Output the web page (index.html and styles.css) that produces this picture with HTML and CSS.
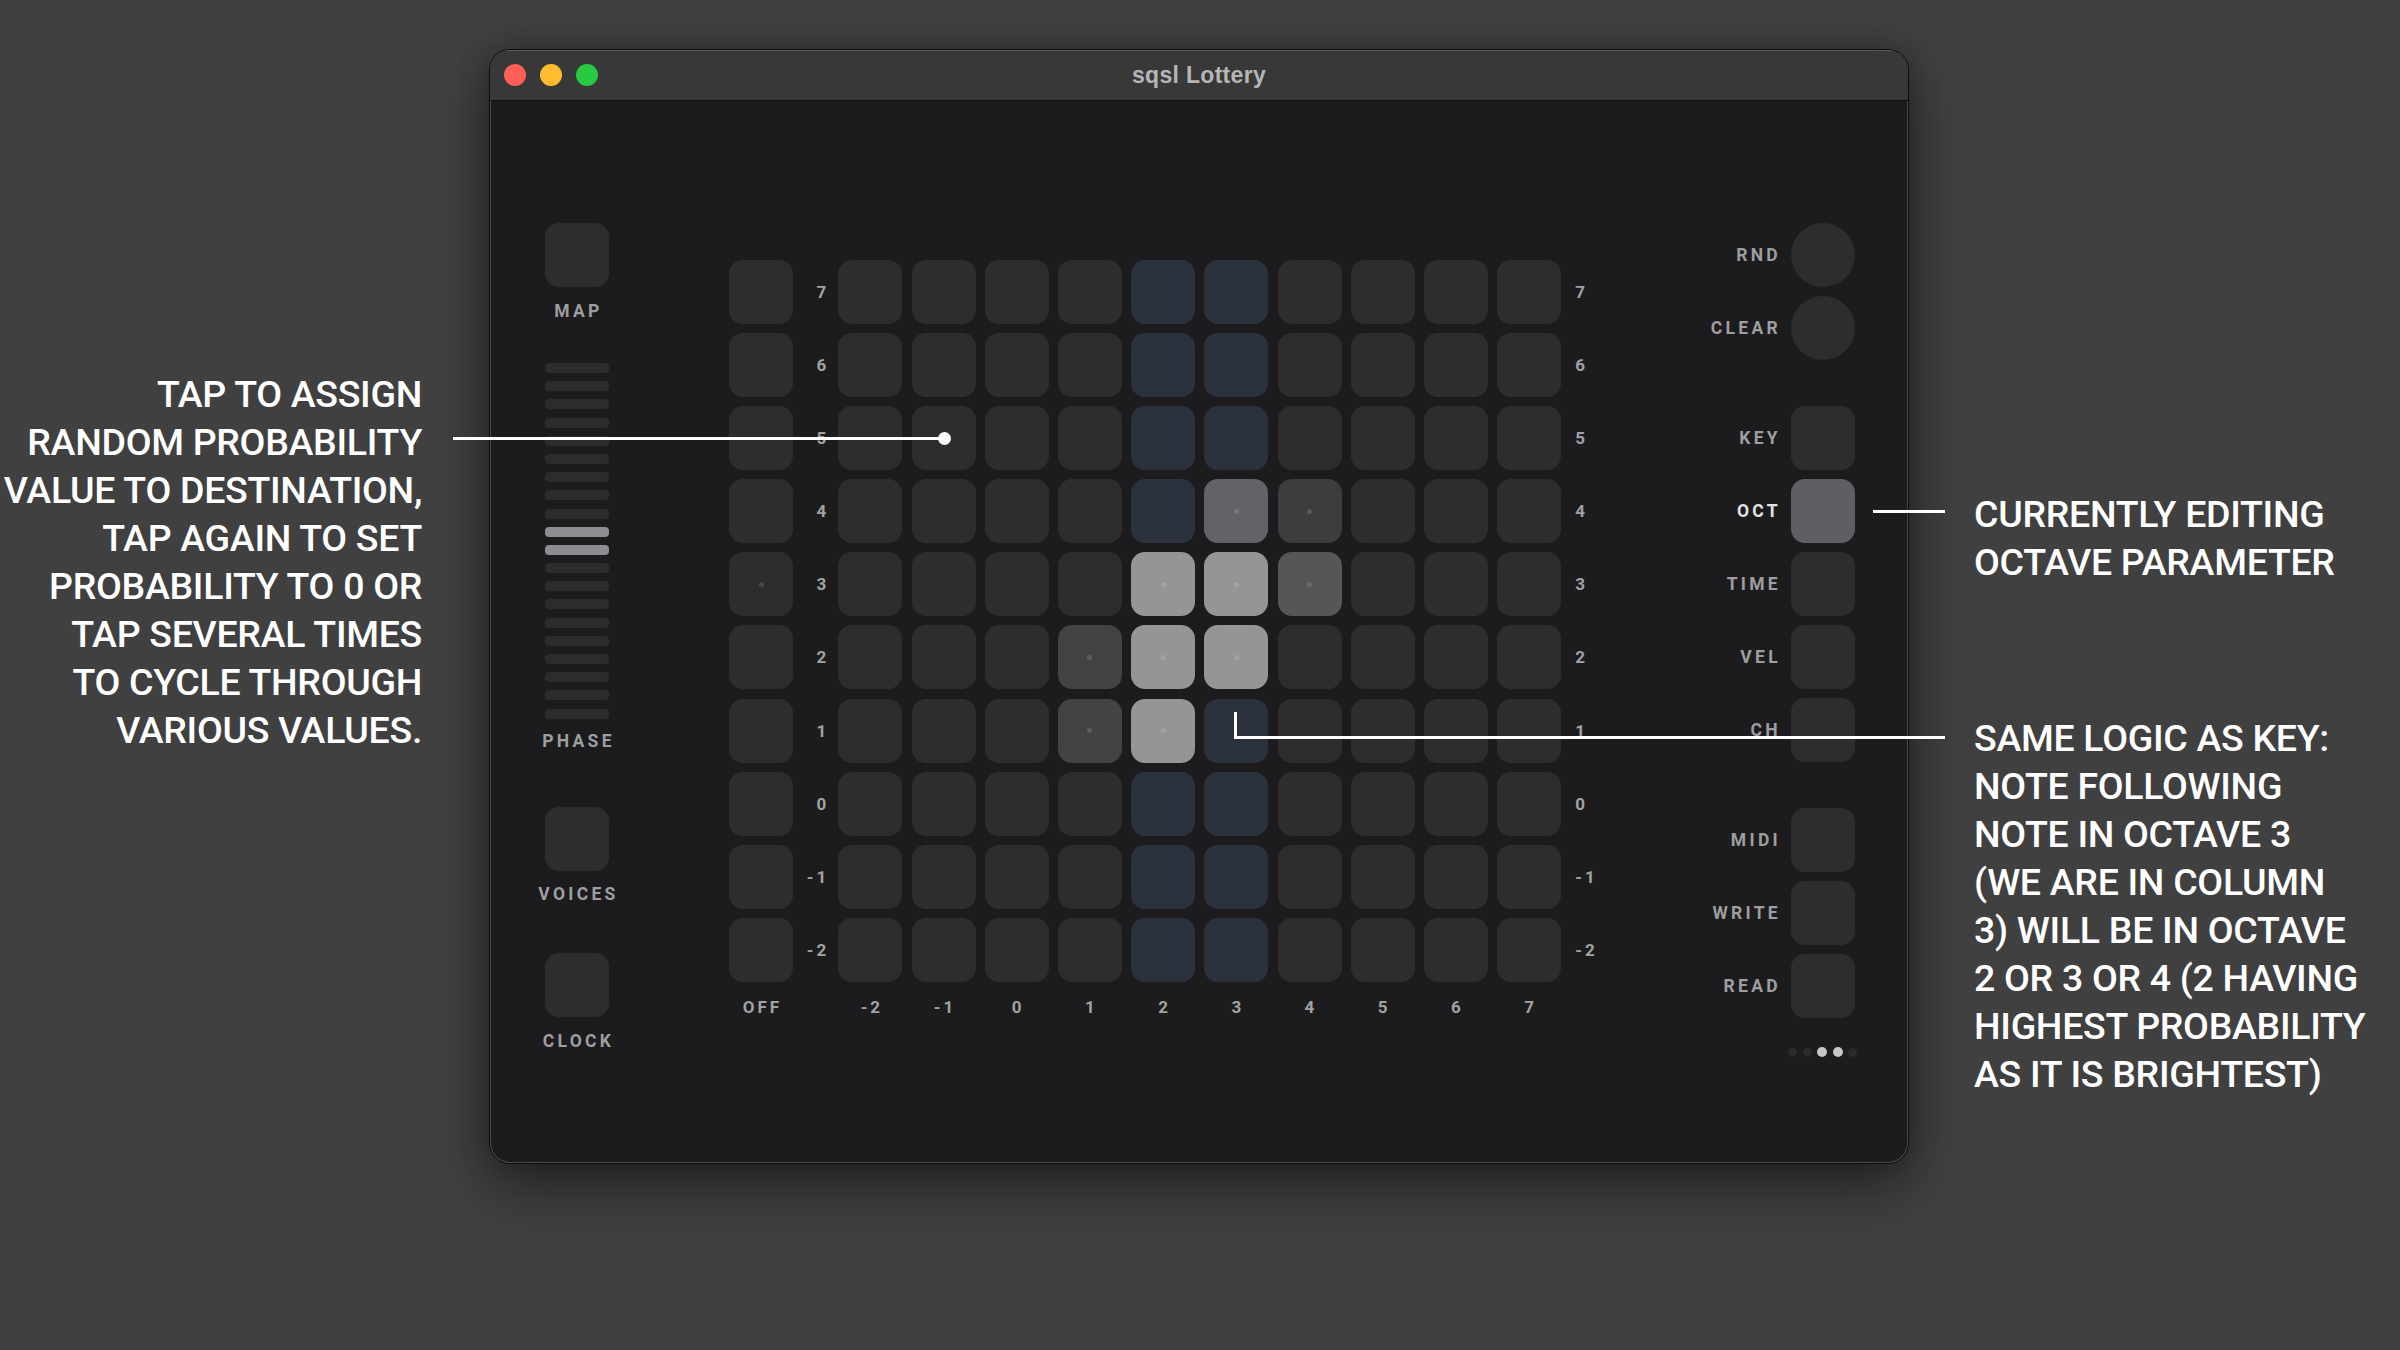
FILE: index.html
```html
<!DOCTYPE html>
<html lang="en">
<head>
<meta charset="utf-8">
<title>sqsl Lottery</title>
<link rel="stylesheet" href="styles.css">
</head>
<body>
<div class="stage">
  <div class="note note-left">TAP TO ASSIGN<br>RANDOM PROBABILITY<br>VALUE TO DESTINATION,<br>TAP AGAIN TO SET<br>PROBABILITY TO 0 OR<br>TAP SEVERAL TIMES<br>TO CYCLE THROUGH<br>VARIOUS VALUES.</div>

  <div class="window">
    <div class="titlebar">
      <div class="lights"><span class="light red"></span><span class="light yellow"></span><span class="light green"></span></div>
      <div class="title">sqsl Lottery</div>
      <div></div>
    </div>
    <div class="content">
      <div class="left-panel">
        <div class="btn"></div>
        <div class="lbl lbl-map">MAP</div>
        <div class="phase">
          <span class="bar"></span><span class="bar"></span><span class="bar"></span><span class="bar"></span><span class="bar"></span>
          <span class="bar"></span><span class="bar"></span><span class="bar"></span><span class="bar"></span><span class="bar on"></span>
          <span class="bar on"></span><span class="bar"></span><span class="bar"></span><span class="bar"></span><span class="bar"></span>
          <span class="bar"></span><span class="bar"></span><span class="bar"></span><span class="bar"></span><span class="bar"></span>
        </div>
        <div class="lbl lbl-phase">PHASE</div>
        <div class="btn btn-voices"></div>
        <div class="lbl lbl-voices">VOICES</div>
        <div class="btn btn-clock"></div>
        <div class="lbl lbl-clock">CLOCK</div>
      </div>

      <div class="grid">
        <!-- row 7 -->
        <div class="cell"></div><div class="rl">7</div>
        <div class="cell"></div><div class="cell"></div><div class="cell"></div><div class="cell"></div><div class="cell blue"></div><div class="cell blue"></div><div class="cell"></div><div class="cell"></div><div class="cell"></div><div class="cell"></div>
        <div class="rr">7</div>
        <!-- row 6 -->
        <div class="cell"></div><div class="rl">6</div>
        <div class="cell"></div><div class="cell"></div><div class="cell"></div><div class="cell"></div><div class="cell blue"></div><div class="cell blue"></div><div class="cell"></div><div class="cell"></div><div class="cell"></div><div class="cell"></div>
        <div class="rr">6</div>
        <!-- row 5 -->
        <div class="cell"></div><div class="rl">5</div>
        <div class="cell"></div><div class="cell"></div><div class="cell"></div><div class="cell"></div><div class="cell blue"></div><div class="cell blue"></div><div class="cell"></div><div class="cell"></div><div class="cell"></div><div class="cell"></div>
        <div class="rr">5</div>
        <!-- row 4 -->
        <div class="cell"></div><div class="rl">4</div>
        <div class="cell"></div><div class="cell"></div><div class="cell"></div><div class="cell"></div><div class="cell blue"></div><div class="cell v4"><span class="pip"></span></div><div class="cell v1"><span class="pip"></span></div><div class="cell"></div><div class="cell"></div><div class="cell"></div>
        <div class="rr">4</div>
        <!-- row 3 -->
        <div class="cell"><span class="pip"></span></div><div class="rl">3</div>
        <div class="cell"></div><div class="cell"></div><div class="cell"></div><div class="cell"></div><div class="cell v5"><span class="pip"></span></div><div class="cell v5"><span class="pip"></span></div><div class="cell v3"><span class="pip"></span></div><div class="cell"></div><div class="cell"></div><div class="cell"></div>
        <div class="rr">3</div>
        <!-- row 2 -->
        <div class="cell"></div><div class="rl">2</div>
        <div class="cell"></div><div class="cell"></div><div class="cell"></div><div class="cell v2"><span class="pip"></span></div><div class="cell v5"><span class="pip"></span></div><div class="cell v5"><span class="pip"></span></div><div class="cell"></div><div class="cell"></div><div class="cell"></div><div class="cell"></div>
        <div class="rr">2</div>
        <!-- row 1 -->
        <div class="cell"></div><div class="rl">1</div>
        <div class="cell"></div><div class="cell"></div><div class="cell"></div><div class="cell v2"><span class="pip"></span></div><div class="cell v5"><span class="pip"></span></div><div class="cell blue"></div><div class="cell"></div><div class="cell"></div><div class="cell"></div><div class="cell"></div>
        <div class="rr">1</div>
        <!-- row 0 -->
        <div class="cell"></div><div class="rl">0</div>
        <div class="cell"></div><div class="cell"></div><div class="cell"></div><div class="cell"></div><div class="cell blue"></div><div class="cell blue"></div><div class="cell"></div><div class="cell"></div><div class="cell"></div><div class="cell"></div>
        <div class="rr">0</div>
        <!-- row -1 -->
        <div class="cell"></div><div class="rl">-1</div>
        <div class="cell"></div><div class="cell"></div><div class="cell"></div><div class="cell"></div><div class="cell blue"></div><div class="cell blue"></div><div class="cell"></div><div class="cell"></div><div class="cell"></div><div class="cell"></div>
        <div class="rr">-1</div>
        <!-- row -2 -->
        <div class="cell"></div><div class="rl">-2</div>
        <div class="cell"></div><div class="cell"></div><div class="cell"></div><div class="cell"></div><div class="cell blue"></div><div class="cell blue"></div><div class="cell"></div><div class="cell"></div><div class="cell"></div><div class="cell"></div>
        <div class="rr">-2</div>
        <!-- column labels -->
        <div class="cl">OFF</div><div></div>
        <div class="cl">-2</div><div class="cl">-1</div><div class="cl">0</div><div class="cl">1</div><div class="cl">2</div><div class="cl">3</div><div class="cl">4</div><div class="cl">5</div><div class="cl">6</div><div class="cl">7</div>
        <div></div>
      </div>

      <div class="right-panel">
        <div class="ctl"><span class="lbl">RND</span><span class="btn round"></span></div>
        <div class="ctl"><span class="lbl">CLEAR</span><span class="btn round"></span></div>
        <div class="ctl group"><span class="lbl">KEY</span><span class="btn"></span></div>
        <div class="ctl"><span class="lbl active">OCT</span><span class="btn on"></span></div>
        <div class="ctl"><span class="lbl">TIME</span><span class="btn"></span></div>
        <div class="ctl"><span class="lbl">VEL</span><span class="btn"></span></div>
        <div class="ctl"><span class="lbl">CH</span><span class="btn"></span></div>
        <div class="ctl group"><span class="lbl">MIDI</span><span class="btn"></span></div>
        <div class="ctl"><span class="lbl">WRITE</span><span class="btn"></span></div>
        <div class="ctl"><span class="lbl">READ</span><span class="btn"></span></div>
        <div class="pages"><span class="pg"></span><span class="pg"></span><span class="pg on"></span><span class="pg on"></span><span class="pg"></span></div>
      </div>
    </div>
  </div>

  <div class="notes-right">
    <div class="note note-oct">CURRENTLY EDITING<br>OCTAVE PARAMETER</div>
    <div class="note note-logic">SAME LOGIC AS KEY:<br>NOTE FOLLOWING<br>NOTE IN OCTAVE 3<br>(WE ARE IN COLUMN<br>3) WILL BE IN OCTAVE<br>2 OR 3 OR 4 (2 HAVING<br>HIGHEST PROBABILITY<br>AS IT IS BRIGHTEST)</div>
  </div>
</div>

<div class="callouts">
  <div class="line line-left"></div>
  <div class="knob"></div>
  <div class="line line-oct"></div>
  <div class="line line-vert"></div>
  <div class="line line-logic"></div>
</div>
</body>
</html>
```

FILE: styles.css
```css
html, body {
  margin: 0;
  padding: 0;
}

body {
  width: 2400px;
  height: 1350px;
  background: #404040;
  overflow: hidden;
  position: relative;
  font-family: Roboto, "Liberation Sans", sans-serif;
}

.stage {
  display: flex;
  align-items: flex-start;
  padding-top: 50px;
}

.note {
  color: #ffffff;
  font-family: Roboto, "Liberation Sans", sans-serif;
  font-weight: 500;
  font-size: 37.5px;
  line-height: 48px;
  letter-spacing: -0.3px;
  white-space: nowrap;
}

.note-left {
  width: 422px;
  text-align: right;
  margin-top: 320px;
}

.notes-right {
  margin-left: 66px;
  display: flex;
  flex-direction: column;
}

.note-oct {
  margin-top: 440px;
}

.note-logic {
  margin-top: 128px;
}

/* window */
.window {
  margin-left: 68px;
  width: 1418px;
  height: 1113px;
  border-radius: 20px;
  background: #1c1c1e;
  overflow: hidden;
  box-shadow: inset 0 0 0 1px #4b4b4d, 0 0 0 1px #0c0c0c, 0 24px 60px rgba(0, 0, 0, 0.45), 0 0 30px rgba(0, 0, 0, 0.25);
  display: flex;
  flex-direction: column;
}

.titlebar {
  height: 50px;
  flex: none;
  background: #383838;
  border-bottom: 1px solid #0e0e0e;
  display: grid;
  grid-template-columns: 1fr auto 1fr;
  align-items: center;
  box-shadow: inset 0 1px 0 #5a5a5a;
}

.lights {
  display: flex;
  gap: 14px;
  padding-left: 14px;
}

.light {
  width: 22px;
  height: 22px;
  border-radius: 50%;
}

.red { background: #fe5f57; }
.yellow { background: #febc2e; }
.green { background: #28c840; }

.title {
  color: #b6b6b6;
  font-family: "Liberation Sans", Arial, sans-serif;
  font-weight: bold;
  font-size: 23px;
  letter-spacing: 0.3px;
}

.content {
  flex: 1;
  display: flex;
  align-items: flex-start;
  padding: 122px 53px 0 55px;
}

/* shared */
.btn {
  width: 64px;
  height: 64px;
  border-radius: 14px;
  background: #2d2d2f;
  flex: none;
  display: block;
}

.btn.round {
  border-radius: 50%;
}

.btn.on {
  background: #5f5f63;
}

.lbl {
  color: #9e9ea0;
  font-family: Roboto, "Liberation Sans", sans-serif;
  font-weight: 700;
  font-size: 17.5px;
  line-height: 20px;
  letter-spacing: 3.3px;
  white-space: nowrap;
}

.lbl.active {
  color: #e2e2e2;
}

/* left panel */
.left-panel {
  width: 64px;
  display: flex;
  flex-direction: column;
  align-items: center;
}

.left-panel .lbl {
  text-align: center;
  padding-left: 3px;
}

.lbl-map { margin-top: 14px; }

.phase {
  margin-top: 42px;
  display: flex;
  flex-direction: column;
  gap: 8.2px;
}

.bar {
  display: block;
  width: 64px;
  height: 10px;
  border-radius: 4px;
  background: #2c2c2e;
}

.bar.on {
  background: #8d8d91;
}

.lbl-phase { margin-top: 12px; }
.btn-voices { margin-top: 56px; }
.lbl-voices { margin-top: 13px; }
.btn-clock { margin-top: 49px; }
.lbl-clock { margin-top: 14px; }

/* grid */
.grid {
  margin-left: 120px;
  margin-top: 37px;
  display: grid;
  grid-template-columns: 64px 27px repeat(10, 64px) 30px;
  grid-template-rows: repeat(10, 64px) 32px;
  row-gap: 9.1px;
  column-gap: 9.2px;
}

.cell {
  border-radius: 14px;
  background: #2d2d2f;
  display: flex;
  align-items: center;
  justify-content: center;
}

.cell.blue { background: #2b323e; }
.cell.v1 { background: #3d3d3f; }
.cell.v2 { background: #434345; }
.cell.v3 { background: #565658; }
.cell.v4 { background: #626369; }
.cell.v5 { background: #959598; }

.pip {
  width: 5px;
  height: 5px;
  border-radius: 50%;
  background: rgba(255, 255, 255, 0.14);
}

.rl, .rr, .cl {
  color: #a2a2a4;
  font-weight: 700;
  font-size: 17px;
  letter-spacing: 3px;
  display: flex;
  align-items: center;
  white-space: nowrap;
}

.rl {
  justify-content: flex-end;
}

.rr {
  padding-left: 5px;
}

.cl {
  justify-content: center;
  padding-left: 3px;
}

/* right panel */
.right-panel {
  flex: 1;
  display: flex;
  flex-direction: column;
  align-items: flex-end;
  gap: 9px;
}

.ctl {
  display: flex;
  align-items: center;
  gap: 10px;
}

.ctl.group {
  margin-top: 37px;
}

.pages {
  margin-top: 20px;
  margin-right: -2px;
  display: flex;
  align-items: center;
  gap: 5.5px;
}

.pg {
  width: 9px;
  height: 9px;
  border-radius: 50%;
  background: #2a2a2c;
}

.pg.on {
  width: 10px;
  height: 10px;
  background: #c6c6c8;
}

/* callout connector lines, drawn over everything */
.callouts {
  position: absolute;
  inset: 0;
  pointer-events: none;
}

.line {
  position: absolute;
  background: #ffffff;
}

.line-left {
  left: 453px;
  top: 437px;
  width: 491px;
  height: 3px;
}

.knob {
  position: absolute;
  left: 938px;
  top: 432px;
  width: 13px;
  height: 13px;
  border-radius: 50%;
  background: #ffffff;
}

.line-oct {
  left: 1873px;
  top: 510px;
  width: 72px;
  height: 3px;
}

.line-vert {
  left: 1234px;
  top: 712px;
  width: 3px;
  height: 27px;
}

.line-logic {
  left: 1234px;
  top: 736px;
  width: 711px;
  height: 3px;
}
```
